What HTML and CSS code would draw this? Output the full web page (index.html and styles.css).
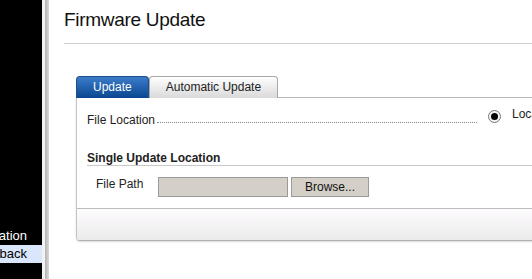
FILE: index.html
```html
<!DOCTYPE html>
<html lang="en">
<head>
    <meta charset="UTF-8">
    <meta name="viewport" content="width=device-width, initial-scale=1.0">
    <title>Firmware Update</title>
    <link rel="stylesheet" href="styles.css">
</head>
<body>
    <div class="sidebar">
        <div class="nav">
            <div class="nav-item"><span>Firmware Configuration</span></div>
            <div class="nav-item active"><span>Firmware Rollback</span></div>
        </div>
    </div>
    <div class="divider"></div>

    <div class="main">
        <div class="header">
            <h1>Firmware Update</h1>
        </div>

        <div class="tabs">
            <div class="tab active">Update</div>
            <div class="tab">Automatic Update</div>
            <div class="tab-fill"></div>
        </div>

        <div class="panel">
            <div class="panel-body">
                <div class="field-row">
                    <div class="field-label">
                        <span>File Location</span>
                        <span class="leader"></span>
                    </div>
                    <label class="radio-option"><span class="radio checked"></span>Local</label>
                </div>

                <div class="section-title">Single Update Location</div>

                <div class="path-row">
                    <span class="path-label">File Path</span>
                    <input class="file-input" type="text" readonly>
                    <button class="browse">Browse...</button>
                </div>
            </div>
            <div class="panel-footer"></div>
        </div>
    </div>
</body>
</html>
```

FILE: styles.css
```css
* { margin: 0; padding: 0; box-sizing: border-box; }
html, body { height: 100%; }
body {
    display: flex;
    overflow: hidden;
    font-family: "Liberation Sans", Arial, sans-serif;
    font-size: 12px;
    color: #222;
    background: #fff;
}

/* left navigation */
.sidebar {
    width: 42px;
    flex-shrink: 0;
    background: #000;
    display: flex;
    flex-direction: column;
    justify-content: flex-end;
    padding-bottom: 16px;
}
.nav-item {
    height: 18px;
    line-height: 18px;
    font-size: 13px;
    color: #fff;
    display: flex;
    justify-content: flex-end;
    padding-right: 15px;
    overflow: hidden;
    white-space: nowrap;
}
.nav-item.active { background: #dae6fb; color: #000; }
.divider {
    width: 7px;
    flex-shrink: 0;
    background: linear-gradient(to right, #f2f2f2 0, #f2f2f2 3px, #b4b4b4 3px, #d8d8d8 7px);
}

/* content */
.main { flex: 1; min-width: 0; overflow: hidden; padding-left: 15px; }
.header {
    padding: 9px 0 12px 0;
    border-bottom: 1px solid #cfcfcf;
}
h1 {
    font-size: 19px;
    line-height: 22px;
    font-weight: normal;
    letter-spacing: -0.3px;
    color: #111;
}

.tabs {
    display: flex;
    align-items: flex-end;
    margin: 32px 0 0 12px;
    width: 560px;
    height: 22px;
}
.tab {
    height: 22px;
    padding: 0 16px;
    line-height: 20px;
    border: 1px solid #a8a8a8;
    border-bottom: none;
    border-radius: 4px 4px 0 0;
    background: linear-gradient(#ffffff, #d9d9d9);
    color: #222;
    white-space: nowrap;
}
.tab.active {
    background: linear-gradient(#3b7cc9, #0a4690);
    border-color: #1d4f8e;
    color: #fff;
}
.tab-fill { flex: 1; height: 22px; border-bottom: 1px solid #b8b8b8; }

.panel {
    margin-left: 12px;
    width: 560px;
    border: 1px solid #c4c4c4;
    border-top: none;
    border-bottom-color: #b0b0b0;
    border-radius: 0 0 4px 4px;
    box-shadow: 0 1px 2px rgba(0,0,0,0.15);
}
.panel-body { padding: 9px 0 11px 10px; }

.field-row { display: flex; align-items: flex-start; }
.field-label {
    display: flex;
    align-items: flex-end;
    width: 390px;
    margin-top: 6px;
    line-height: 14px;
    white-space: nowrap;
}
.leader {
    flex: 1;
    margin: 0 0 4px 2px;
    border-bottom: 1px dotted #8a8a8a;
}
.radio-option {
    display: flex;
    align-items: flex-start;
    line-height: 14px;
    margin-left: 11px;
    white-space: nowrap;
}
.radio {
    width: 13px;
    height: 13px;
    margin: 3px 11px 0 0;
    border: 1px solid #777;
    border-radius: 50%;
    background: #f4f4f4;
    display: flex;
    align-items: center;
    justify-content: center;
}
.radio.checked::after {
    content: "";
    width: 7px;
    height: 7px;
    border-radius: 50%;
    background: #000;
}

.section-title {
    margin-top: 24px;
    font-weight: bold;
    line-height: 14px;
    border-bottom: 1px solid #c8c8c8;
}

.path-row {
    display: flex;
    align-items: flex-start;
    margin-top: 11px;
    padding-left: 9px;
}
.path-label { width: 62px; line-height: 14px; }
.file-input {
    width: 130px;
    height: 20px;
    background: #d4d0c8;
    border: 1px solid #9a9a9a;
    outline: none;
}
.browse {
    width: 78px;
    height: 20px;
    margin-left: 3px;
    background: #d4d0c8;
    border: 1px solid #9a9a9a;
    font: inherit;
    color: #111;
}

.panel-footer {
    height: 32px;
    border-top: 1px solid #bcbcbc;
    background: linear-gradient(#fefcfe, #ebebeb);
    border-radius: 0 0 4px 4px;
}
```
